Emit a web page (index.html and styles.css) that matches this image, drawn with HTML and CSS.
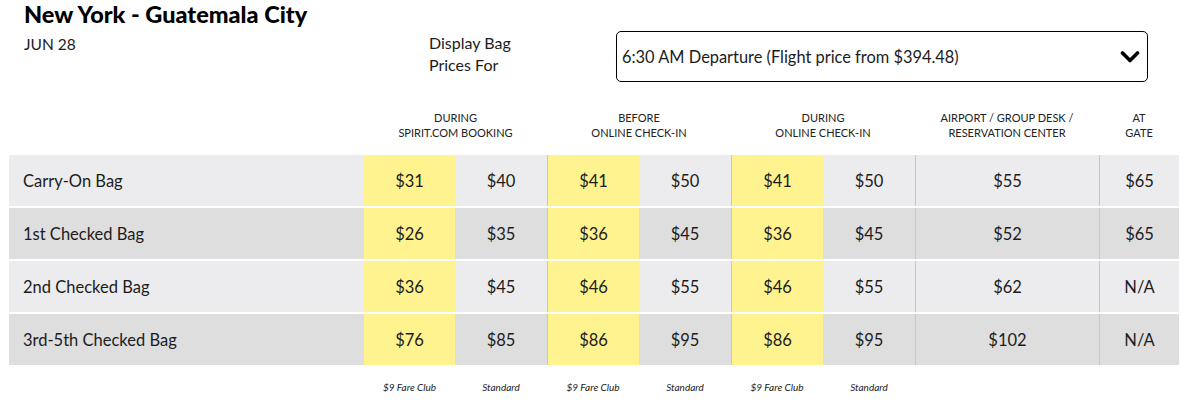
FILE: index.html
```html
<!DOCTYPE html>
<html>
<head>
<meta charset="utf-8">
<link rel="stylesheet" href="styles.css">
</head>
<body>
<div class="page">
  <header class="top">
    <h1 class="title">New York - Guatemala City</h1>
    <div class="top-row">
      <div class="date">JUN 28</div>
      <div class="display-label">Display Bag<br>Prices For</div>
      <div class="select">
        <span class="select-text">6:30 AM Departure (Flight price from $394.48)</span>
        <svg class="chevron" width="20" height="14" viewBox="0 0 20 14"><path d="M2.5 3 L10 10.5 L17.5 3" fill="none" stroke="#000" stroke-width="3.6" stroke-linecap="round" stroke-linejoin="round"/></svg>
      </div>
    </div>
  </header>

  <div class="table">
    <div class="head-row">
      <div class="h-label"></div>
      <div class="h-group">DURING<br>SPIRIT.COM BOOKING</div>
      <div class="h-group">BEFORE<br>ONLINE CHECK-IN</div>
      <div class="h-group">DURING<br>ONLINE CHECK-IN</div>
      <div class="h-group h-airport">AIRPORT / GROUP DESK /<br>RESERVATION CENTER</div>
      <div class="h-gate">AT<br>GATE</div>
    </div>

    <div class="row odd">
      <div class="label">Carry-On Bag</div>
      <div class="cell club first">$31</div><div class="cell">$40</div>
      <div class="cell club sep">$41</div><div class="cell">$50</div>
      <div class="cell club sep">$41</div><div class="cell">$50</div>
      <div class="cell sep">$55</div>
      <div class="cell sep">$65</div>
    </div>
    <div class="row even">
      <div class="label">1st Checked Bag</div>
      <div class="cell club first">$26</div><div class="cell">$35</div>
      <div class="cell club sep">$36</div><div class="cell">$45</div>
      <div class="cell club sep">$36</div><div class="cell">$45</div>
      <div class="cell sep">$52</div>
      <div class="cell sep">$65</div>
    </div>
    <div class="row odd">
      <div class="label">2nd Checked Bag</div>
      <div class="cell club first">$36</div><div class="cell">$45</div>
      <div class="cell club sep">$46</div><div class="cell">$55</div>
      <div class="cell club sep">$46</div><div class="cell">$55</div>
      <div class="cell sep">$62</div>
      <div class="cell sep">N/A</div>
    </div>
    <div class="row even">
      <div class="label">3rd-5th Checked Bag</div>
      <div class="cell club first">$76</div><div class="cell">$85</div>
      <div class="cell club sep">$86</div><div class="cell">$95</div>
      <div class="cell club sep">$86</div><div class="cell">$95</div>
      <div class="cell sep">$102</div>
      <div class="cell sep">N/A</div>
    </div>

    <div class="foot-row">
      <div></div>
      <div class="foot">$9 Fare Club</div><div class="foot">Standard</div>
      <div class="foot">$9 Fare Club</div><div class="foot">Standard</div>
      <div class="foot">$9 Fare Club</div><div class="foot">Standard</div>
      <div></div><div></div>
    </div>
  </div>
</div>
</body>
</html>
```

FILE: styles.css
```css
* { box-sizing: border-box; }
html, body { margin: 0; padding: 0; background: #fff; }
body {
  font-family: Lato, "Liberation Sans", sans-serif;
  color: #1c1c1c;
  width: 1188px;
}
.page { padding: 0 9px; }

.top { padding-left: 15px; }
.title {
  margin: 0;
  padding-top: 1px;
  font-size: 23.5px;
  line-height: 27px;
  font-weight: 900;
  color: #000;
  height: 31px;
}
.top-row {
  display: grid;
  grid-template-columns: 405px 187px 532px;
  align-items: start;
}
.date {
  font-size: 15.5px;
  line-height: 18px;
  padding-top: 4px;
}
.display-label {
  font-size: 16px;
  line-height: 22px;
  padding-top: 1px;
}
.select {
  height: 51px;
  border: 1px solid #000;
  border-radius: 5px;
  display: flex;
  align-items: center;
  justify-content: space-between;
  padding: 0 6px 0 5px;
}
.select-text { font-size: 16.4px; }
.chevron { display: block; margin-right: 1px; }

.table { margin-top: 24px; }
.head-row, .row, .foot-row {
  display: grid;
  grid-template-columns: 355px 91px 92px 92px 92px 92px 92px 184px 80px;
}
.head-row {
  height: 49px;
  align-items: center;
  padding-bottom: 12px;
}
.h-label { grid-column: 1; }
.h-group {
  grid-column: span 2;
  text-align: center;
  font-size: 11px;
  line-height: 15px;
  color: #222;
}
.h-airport { grid-column: span 1; }
.h-gate {
  text-align: center;
  font-size: 11px;
  line-height: 15px;
  color: #222;
}
.row {
  height: 51px;
  margin-bottom: 2px;
  font-size: 16.5px;
}
.row.odd { background: #ececee; }
.row.even { background: #dedede; }
.label {
  display: flex;
  align-items: center;
  padding-left: 14px;
}
.cell {
  display: flex;
  align-items: center;
  justify-content: center;
}
.cell.club { background: #fff38f; }
.cell.sep { border-left: 1px solid #c6c6cc; }
.foot-row { height: 44px; align-items: center; margin-top: -2px; }
.foot {
  text-align: center;
  font-size: 10px;
  font-style: italic;
  color: #222;
}
```
